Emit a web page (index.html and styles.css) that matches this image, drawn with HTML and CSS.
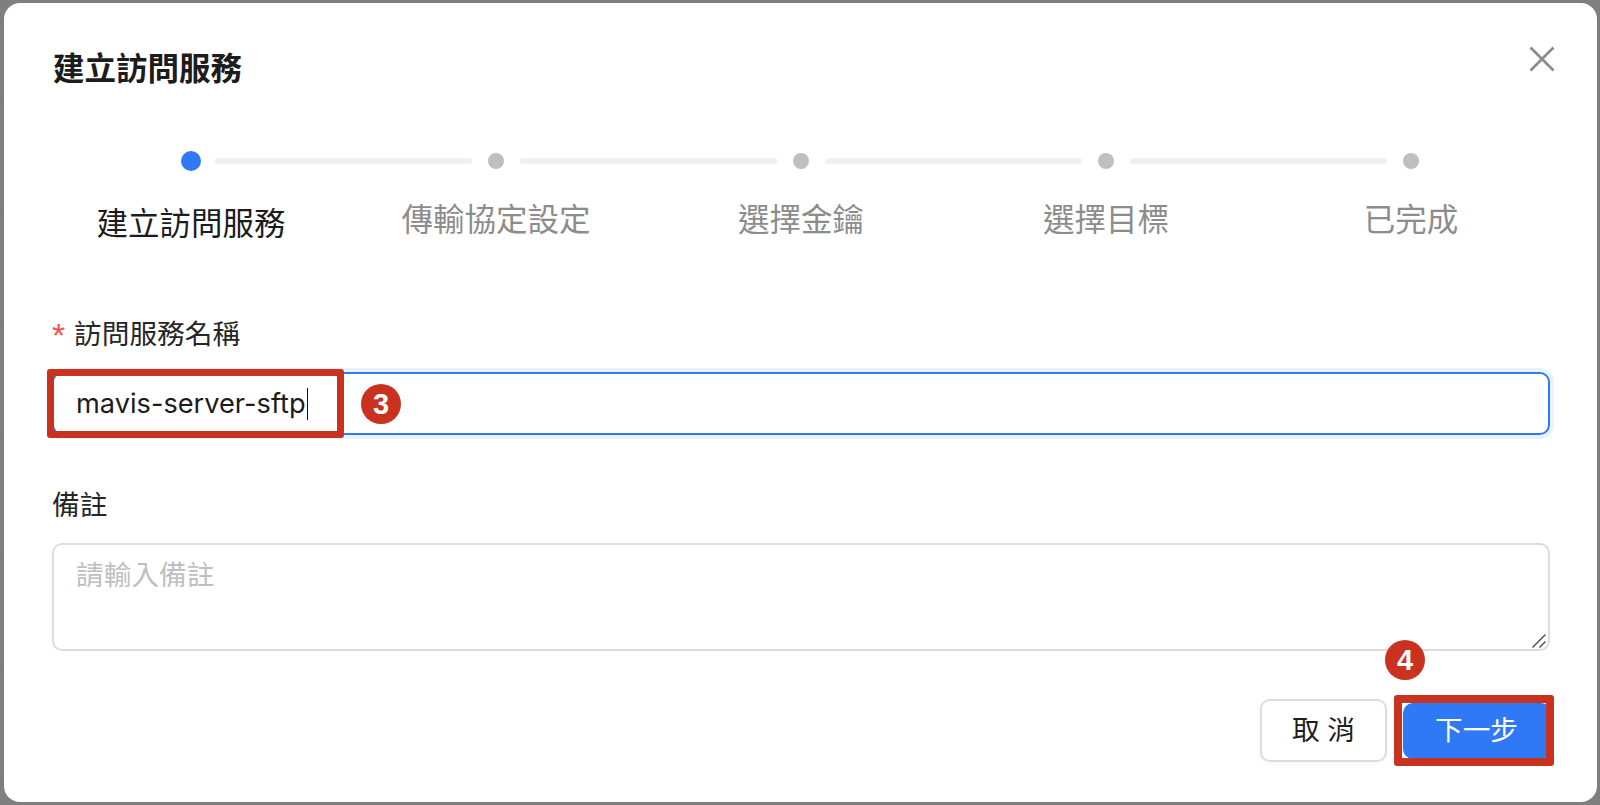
FILE: index.html
```html
<!DOCTYPE html>
<html lang="zh-Hant">
<head>
<meta charset="utf-8">
<title>建立訪問服務</title>
<link rel="stylesheet" href="styles.css">
</head>
<body>
<main class="dialog">
  <header class="dialog-head">
    <h1 class="dialog-title">建立訪問服務</h1>
    <button class="close" aria-label="關閉">
      <svg viewBox="0 0 26 26" width="26" height="26"><path d="M1.500 1.500l23 23M24.500 1.500l-23 23" stroke="#8c8c8c" stroke-width="2.800" fill="none"/></svg>
    </button>
  </header>

  <section class="steps">
    <div class="rail">
      <span class="dot dot-active"></span><span class="line"></span>
      <span class="dot"></span><span class="line"></span>
      <span class="dot"></span><span class="line"></span>
      <span class="dot"></span><span class="line"></span>
      <span class="dot"></span>
    </div>
    <ol class="step-labels">
      <li class="step-active">建立訪問服務</li>
      <li>傳輸協定設定</li>
      <li>選擇金鑰</li>
      <li>選擇目標</li>
      <li>已完成</li>
    </ol>
  </section>

  <form class="form">
    <label class="field-label name-label"><span class="req">*</span>訪問服務名稱</label>
    <div class="input-wrap">
      <div class="input"><span class="input-text">mavis-server-sftp</span><span class="caret"></span></div>
      <span class="mark mark-input"></span>
      <span class="badge badge-3">3</span>
    </div>
    <label class="field-label note-label">備註</label>
    <div class="note-wrap">
      <textarea class="note" placeholder="請輸入備註"></textarea>
      <svg class="grip" viewBox="0 0 14 14" width="14" height="14"><path d="M.5 13.500L13.500.5M7.500 13.500l6-6" stroke="#555" stroke-width="1.500" fill="none"/></svg>
    </div>
    <div class="actions">
      <button type="button" class="btn btn-cancel">取 消</button>
      <div class="next-wrap">
        <button type="button" class="btn btn-next">下一步</button>
        <span class="mark mark-next"></span>
        <span class="badge badge-4">4</span>
      </div>
    </div>
  </form>
</main>
</body>
</html>
```
FILE: styles.css
```css
* { box-sizing: border-box; }
html, body { margin: 0; height: 805px; overflow: hidden; }
body {
  background-color: #7f7f7f;
  background-image: linear-gradient(#777 1px, transparent 1px);
  background-size: 100% 113.700px;
  background-position: 0 -16px;
  padding: 3px 3px 3px 4px;
  font-family: "Liberation Sans", "Noto Sans CJK TC", sans-serif;
  color: #1f1f1f;
}
.dialog {
  height: 799px;
  background: #fff;
  border-radius: 16px;
  padding: 0 47px 0 48px;
}
.dialog-head {
  height: 130px;
  display: flex;
  justify-content: space-between;
  align-items: flex-start;
}
.dialog-title {
  margin: 46px 0 0 1px;
  font-size: 31.500px;
  line-height: 40px;
  font-weight: 700;
  color: #1c1c1c;
}
.close {
  margin: 43px -5px 0 0;
  padding: 0;
  width: 26px;
  height: 26px;
  border: 0;
  background: none;
  display: block;
}
.close svg { display: block; }

.steps { margin: 0 -10px; }
.rail {
  display: flex;
  align-items: center;
  height: 20px;
  margin: 18px 0 0 139px;
  width: 1240px;
}
.dot {
  flex: none;
  width: 16px;
  height: 16px;
  margin: 0 2px;
  border-radius: 50%;
  background: #bfbfbf;
}
.dot-active { width: 20px; height: 20px; margin: 0; background: #2f78f6; }
.line {
  flex: 1;
  height: 6px;
  margin: 0 14px;
  border-radius: 3px;
  background: #f0f0f0;
}
.step-labels {
  list-style: none;
  margin: 29px 0 0 -3.500px;
  padding: 0;
  display: grid;
  grid-template-columns: repeat(5, 305px);
  font-size: 31.500px;
  line-height: 40px;
  color: #8c8c8c;
  text-align: center;
  height: 44px;
}
.step-labels li { white-space: nowrap; }
.step-active { color: #1c1c1c; padding-top: 4px; }

.field-label {
  display: block;
  font-size: 27.700px;
  line-height: 36px;
  color: #262626;
}
.name-label { margin-top: 73px; }
.req {
  display: inline-block;
  width: 22px;
  padding-left: 0;
  color: #f5544d;
  font-size: 34px;
  line-height: 0;
  vertical-align: -3px;
}
.input-wrap { position: relative; margin-top: 19px; }
.input {
  height: 63px;
  border: 2px solid #2f78f6;
  border-radius: 10px;
  box-shadow: 0 0 0 4px #eaf2fe;
  padding-left: 22px;
  display: flex;
  align-items: center;
  font-family: Inter, "Noto Sans CJK TC", sans-serif;
  font-size: 27.200px;
  color: #1c1c1c;
}
.caret { width: 1.500px; height: 32px; background: #111; margin-left: 1px; }
.mark { position: absolute; border: 7px solid #c9321f; border-radius: 3px; }
.mark-input { left: -5px; top: -3px; width: 297px; height: 69px; }
.badge {
  position: absolute;
  width: 40px;
  height: 40px;
  border-radius: 50%;
  background: #c9321f;
  color: #fff;
  font-size: 29px;
  font-weight: 700;
  line-height: 40px;
  text-align: center;
}
.badge-3 { left: 309px; top: 12px; }
.note-label { margin-top: 53px; }
.note-wrap { position: relative; margin-top: 19px; }
.note {
  display: block;
  width: 100%;
  height: 108px;
  border: 2px solid #dcdcdc;
  border-radius: 10px;
  padding: 13px 22px;
  font: 27.700px/36px "Liberation Sans", "Noto Sans CJK TC", sans-serif;
  outline: none;
  resize: none;
}
.note::placeholder { color: #bfbfbf; }
.grip { position: absolute; right: 4px; bottom: 3px; }
.actions {
  display: flex;
  justify-content: flex-end;
  gap: 15px;
  margin-top: 48px;
  padding-right: 4px;
}
.btn {
  height: 63px;
  border-radius: 10px;
  font: 27.700px/1 "Liberation Sans", "Noto Sans CJK TC", sans-serif;
  padding: 0;
}
.btn-cancel {
  width: 127px;
  background: #fff;
  border: 2px solid #dcdcdc;
  color: #1f1f1f;
  box-shadow: 0 2px 6px rgba(0, 0, 0, .04);
}
.next-wrap { position: relative; width: 144px; }
.btn-next {
  display: block;
  width: 148px;
  height: 56px;
  margin: 4px 0 0 1px;
  padding-right: 1px;
  background: #2f78f6;
  border: 0;
  color: #fff;
}
.mark-next { left: -8px; top: -4px; width: 160px; height: 71px; border-width: 8px; }
.badge-4 { left: -17px; top: -59px; }
```
